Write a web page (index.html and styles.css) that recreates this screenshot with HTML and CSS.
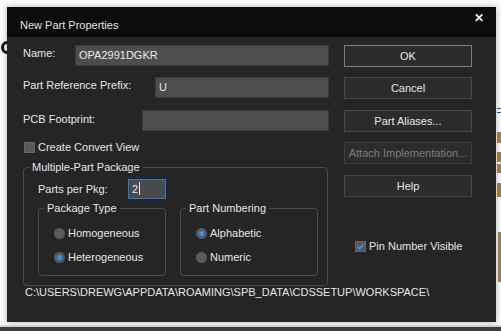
FILE: index.html
```html
<!DOCTYPE html>
<html lang="en">
<head>
  <meta charset="UTF-8" />
  <title>New Part Properties</title>
  <link rel="stylesheet" href="styles.css">
</head>
<body>

  <div class="desktop">
    <!-- bits of the schematic canvas behind the dialog -->
    <span class="canvas-curve"></span>
    <span class="pin-mark m1"></span>
    <span class="pin-mark m2"></span>
    <span class="pin-mark m3"></span>
    <span class="pin-mark m4"></span>
    <span class="pin-mark m5"></span>
    <span class="wire-mark"></span>
    <div class="taskbar"></div>

    <div class="dialog">
      <div class="titlebar">
        <span class="title">New Part Properties</span>
        <span class="close">✕</span>
      </div>

      <div class="dialog-body">
        <div class="columns">

          <!-- left: fields and options -->
          <div class="main">
            <div class="row">
              <span class="label">Name:</span>
              <div class="field w-name">OPA2991DGKR</div>
            </div>
            <div class="row">
              <span class="label">Part Reference Prefix:</span>
              <div class="field w-prefix">U</div>
            </div>
            <div class="row">
              <span class="label">PCB Footprint:</span>
              <div class="field w-footprint"></div>
            </div>

            <div class="check convert">
              <span class="box"></span>
              <span>Create Convert View</span>
            </div>

            <fieldset class="group outer">
              <legend>Multiple-Part Package</legend>
              <div class="group-inner">
                <div class="pkg-row">
                  <span class="label pkg-label">Parts per Pkg:</span>
                  <div class="field focused">2<span class="caret"></span></div>
                </div>

                <div class="subgroups">
                  <fieldset class="group sub type">
                    <legend>Package Type</legend>
                    <div class="radios">
                      <div class="radio"><span class="dot"></span>Homogeneous</div>
                      <div class="radio on"><span class="dot"></span>Heterogeneous</div>
                    </div>
                  </fieldset>
                  <fieldset class="group sub numbering">
                    <legend>Part Numbering</legend>
                    <div class="radios">
                      <div class="radio on"><span class="dot"></span>Alphabetic</div>
                      <div class="radio"><span class="dot"></span>Numeric</div>
                    </div>
                  </fieldset>
                </div>
              </div>
            </fieldset>
          </div>

          <!-- right: buttons -->
          <div class="side">
            <button class="btn default">OK</button>
            <button class="btn">Cancel</button>
            <button class="btn">Part Aliases...</button>
            <button class="btn" disabled>Attach Implementation...</button>
            <button class="btn">Help</button>

            <div class="check pin">
              <span class="box checked">
                <svg width="9" height="9" viewBox="0 0 9 9"><path d="M1.5 4.5 L3.6 6.8 L7.8 1.8" fill="none" stroke="#1e9bff" stroke-width="1.6"/></svg>
              </span>
              <span>Pin Number Visible</span>
            </div>
          </div>

        </div>

        <div class="path">C:\USERS\DREWG\APPDATA\ROAMING\SPB_DATA\CDSSETUP\WORKSPACE\</div>
      </div>
    </div>
  </div>

</body>
</html>
```

FILE: styles.css
```css
* {
  box-sizing: border-box;
}

body {
  margin: 0;
  font-family: "Liberation Sans", Arial, sans-serif;
  font-size: 11px;
  background: #fafafa;
}

.desktop {
  position: relative;
  width: 501px;
  height: 331px;
  overflow: hidden;
  background: #fbfbfb;
}

/* background canvas leftovers */
.canvas-curve {
  position: absolute;
  left: 1px;
  top: 41px;
  width: 12px;
  height: 13px;
  border: 3px solid #111;
  border-radius: 50%;
}

.pin-mark {
  position: absolute;
  left: 497px;
  width: 5px;
  background: #a4844a;
}

.m1 { top: 132px; height: 11px; }
.m2 { top: 152px; height: 10px; }
.m3 { top: 164px; height: 9px; }
.m4 { top: 183px; height: 14px; }
.m5 { top: 232px; height: 50px; width: 4px; left: 498px; }

.wire-mark {
  position: absolute;
  left: 497px;
  top: 108px;
  width: 4px;
  height: 5px;
  border-top: 1px solid #2a55b0;
  border-bottom: 1px solid #2a55b0;
}

.taskbar {
  position: absolute;
  left: 0;
  right: 0;
  bottom: 0;
  height: 6px;
  background: #3c3c3c;
  border-top: 2px solid #d6d6d6;
}

/* dialog window */
.dialog {
  position: absolute;
  left: 7px;
  top: 7px;
  width: 489px;
  height: 315px;
  background: #252525;
  color: #e6e6e6;
  box-shadow: 0 0 6px rgba(0, 0, 0, 0.3);
}

.titlebar {
  display: flex;
  justify-content: space-between;
  height: 30px;
  background: #0c0c0c;
  padding: 0 12px 0 13px;
}

.title {
  padding-top: 12px;
  font-size: 11px;
  color: #e2e2e2;
}

.close {
  padding-top: 4px;
  font-size: 12px;
  font-weight: bold;
  color: #f2f2f2;
}

.dialog-body {
  padding: 8px 0 0 16px;
}

.columns {
  display: flex;
}

.main {
  width: 306px;
}

.row {
  display: flex;
  align-items: flex-start;
  height: 21px;
  margin-bottom: 11px;
}

.row .label {
  padding-top: 1px;
  line-height: 14px;
}

.row:nth-child(2) {
  margin-bottom: 12px;
}

.row:nth-child(3) {
  margin-bottom: 11px;
}

.row:nth-child(3) .label {
  padding-top: 2px;
}

.label {
  color: #e6e6e6;
}

.field {
  margin-left: auto;
  height: 21px;
  line-height: 19px;
  padding-left: 3px;
  background: #4d4d4d;
  border: 1px solid #3a3a3a;
  color: #e8e8e8;
}

.w-name { width: 254px; }
.w-prefix { width: 174px; }
.w-footprint { width: 187px; }

/* checkboxes */
.check {
  display: flex;
  align-items: center;
  gap: 3px;
  height: 11px;
  line-height: 11px;
}

.check .box {
  display: flex;
  align-items: center;
  justify-content: center;
  width: 11px;
  height: 11px;
  background: #585858;
  border: 1px solid #666;
}

.convert {
  margin: 0 0 7px 1px;
}

/* group boxes */
.group {
  margin: 0;
  padding: 0;
  min-width: 0;
  border: 1px solid #4b4b4b;
  border-radius: 4px;
}

.group legend {
  margin-left: 5px;
  padding: 0 3px;
  height: 14px;
  line-height: 14px;
  color: #e6e6e6;
}

.outer {
  width: 305px;
}

.group-inner {
  padding: 5px 0 9px 14px;
}

.pkg-row {
  display: flex;
  align-items: center;
  height: 20px;
  margin-bottom: 2px;
}

.pkg-label {
  width: 90px;
}

.focused {
  margin-left: 0;
  width: 38px;
  height: 20px;
  line-height: 18px;
  border-color: #1a7fd6;
  background: #4a4a4a;
}

.caret {
  display: inline-block;
  width: 1px;
  height: 13px;
  margin-left: 1px;
  vertical-align: -2px;
  background: #e8e8e8;
}

.subgroups {
  display: flex;
  gap: 14px;
}

.type {
  width: 128px;
}

.numbering {
  width: 138px;
}

.radios {
  display: flex;
  flex-direction: column;
  gap: 10px;
  padding: 11px 0 11px 15px;
}

.radio {
  display: flex;
  align-items: center;
  gap: 3px;
  height: 14px;
}

.radio .dot {
  display: flex;
  align-items: center;
  justify-content: center;
  width: 11px;
  height: 11px;
  border-radius: 50%;
  background: #5a5a5a;
}

.radio.on .dot::after {
  content: "";
  width: 5px;
  height: 5px;
  border-radius: 50%;
  background: #1e9bff;
}

/* buttons */
.side {
  width: 128px;
  margin-left: 15px;
}

.btn {
  display: block;
  width: 128px;
  height: 22px;
  margin: 0 0 10px;
  padding: 0;
  font-family: inherit;
  font-size: 11px;
  color: #e6e6e6;
  background: #2c2c2c;
  border: 1px solid #474747;
}

.btn:nth-child(2),
.btn:nth-child(4) {
  margin-bottom: 11px;
}

.btn.default {
  border-color: #7a7a7a;
}

.btn:disabled {
  color: #7c7c7c;
  border-color: #3e3e3e;
}

.pin {
  margin: 44px 0 0 11px;
}

.path {
  margin-top: 0;
  padding-left: 2px;
  height: 13px;
  line-height: 13px;
  color: #e6e6e6;
}
```
